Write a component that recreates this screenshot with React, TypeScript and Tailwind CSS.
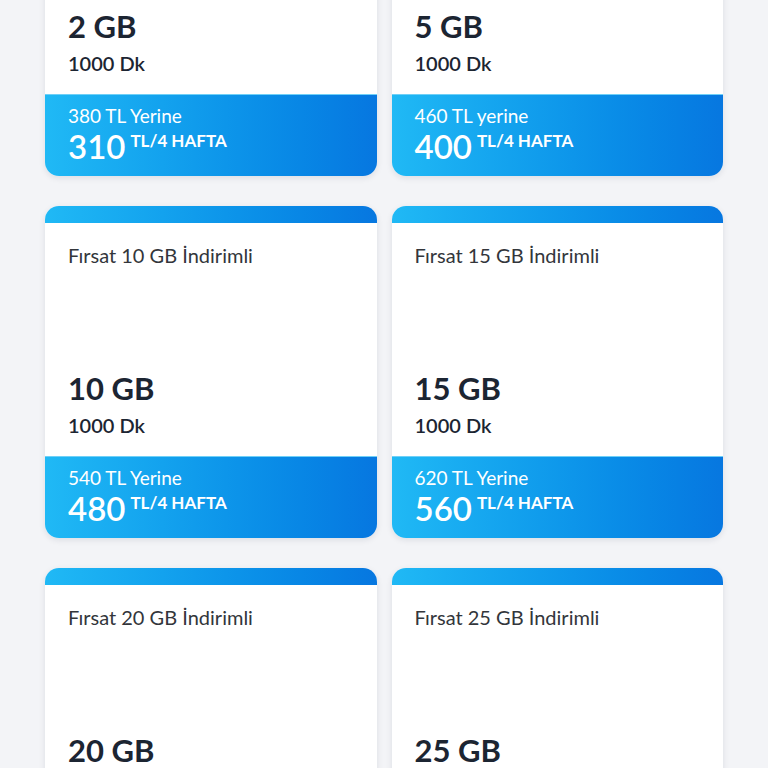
type Pack = {
  gb: number;
  minutes: string;
  oldPrice: string;
  price: number;
};

const packs: Pack[] = [
  { gb: 2, minutes: "1000 Dk", oldPrice: "380 TL Yerine", price: 310 },
  { gb: 5, minutes: "1000 Dk", oldPrice: "460 TL yerine", price: 400 },
  { gb: 10, minutes: "1000 Dk", oldPrice: "540 TL Yerine", price: 480 },
  { gb: 15, minutes: "1000 Dk", oldPrice: "620 TL Yerine", price: 560 },
  { gb: 20, minutes: "1000 Dk", oldPrice: "700 TL Yerine", price: 640 },
  { gb: 25, minutes: "1000 Dk", oldPrice: "780 TL Yerine", price: 720 },
];

function PackCard({ pack }: { pack: Pack }) {
  return (
    <div className="flex h-[332px] flex-col overflow-hidden rounded-[14px] bg-white shadow-[0_2px_6px_rgba(15,30,60,0.10)]">
      <div className="h-[17px] shrink-0 bg-gradient-to-r from-[#20b9f5] to-[#0777e0]" />
      <div className="flex flex-1 flex-col justify-between px-[23px] pt-[20px] pb-[18px]">
        <p className="text-[20px] leading-[24px] font-normal text-[#33363b]">
          Fırsat {pack.gb} GB İndirimli
        </p>
        <div>
          <p className="text-[31px] leading-[36px] font-bold text-[#1c2532]">{pack.gb} GB</p>
          <p className="mt-[6px] text-[20px] leading-[26px] font-semibold text-[#1c2532]">
            {pack.minutes}
          </p>
        </div>
      </div>
      <div className="h-[82px] shrink-0 border-t border-[#6fd0f7] bg-gradient-to-r from-[#20b9f5] to-[#0777e0] px-[23px] pt-[10px] text-white">
        <p className="text-[19px] leading-[22px] font-normal">{pack.oldPrice}</p>
        <p className="mt-[1px] flex items-start leading-[36px]">
          <span className="text-[33px] font-semibold">{pack.price}</span>
          <span className="ml-[5px] mt-[-1px] text-[17px] font-bold leading-[28px]">TL/4 HAFTA</span>
        </p>
      </div>
    </div>
  );
}

export default function App() {
  return (
    <div
      className="h-[768px] w-[768px] overflow-hidden bg-[#f3f4f7]"
      style={{ fontFamily: "Lato, 'Noto Sans', sans-serif" }}
    >
      <div className="mt-[-156px] grid grid-cols-2 gap-x-[15px] gap-y-[30px] px-[45px]">
        {packs.map((p) => (
          <PackCard key={p.gb} pack={p} />
        ))}
      </div>
    </div>
  );
}
